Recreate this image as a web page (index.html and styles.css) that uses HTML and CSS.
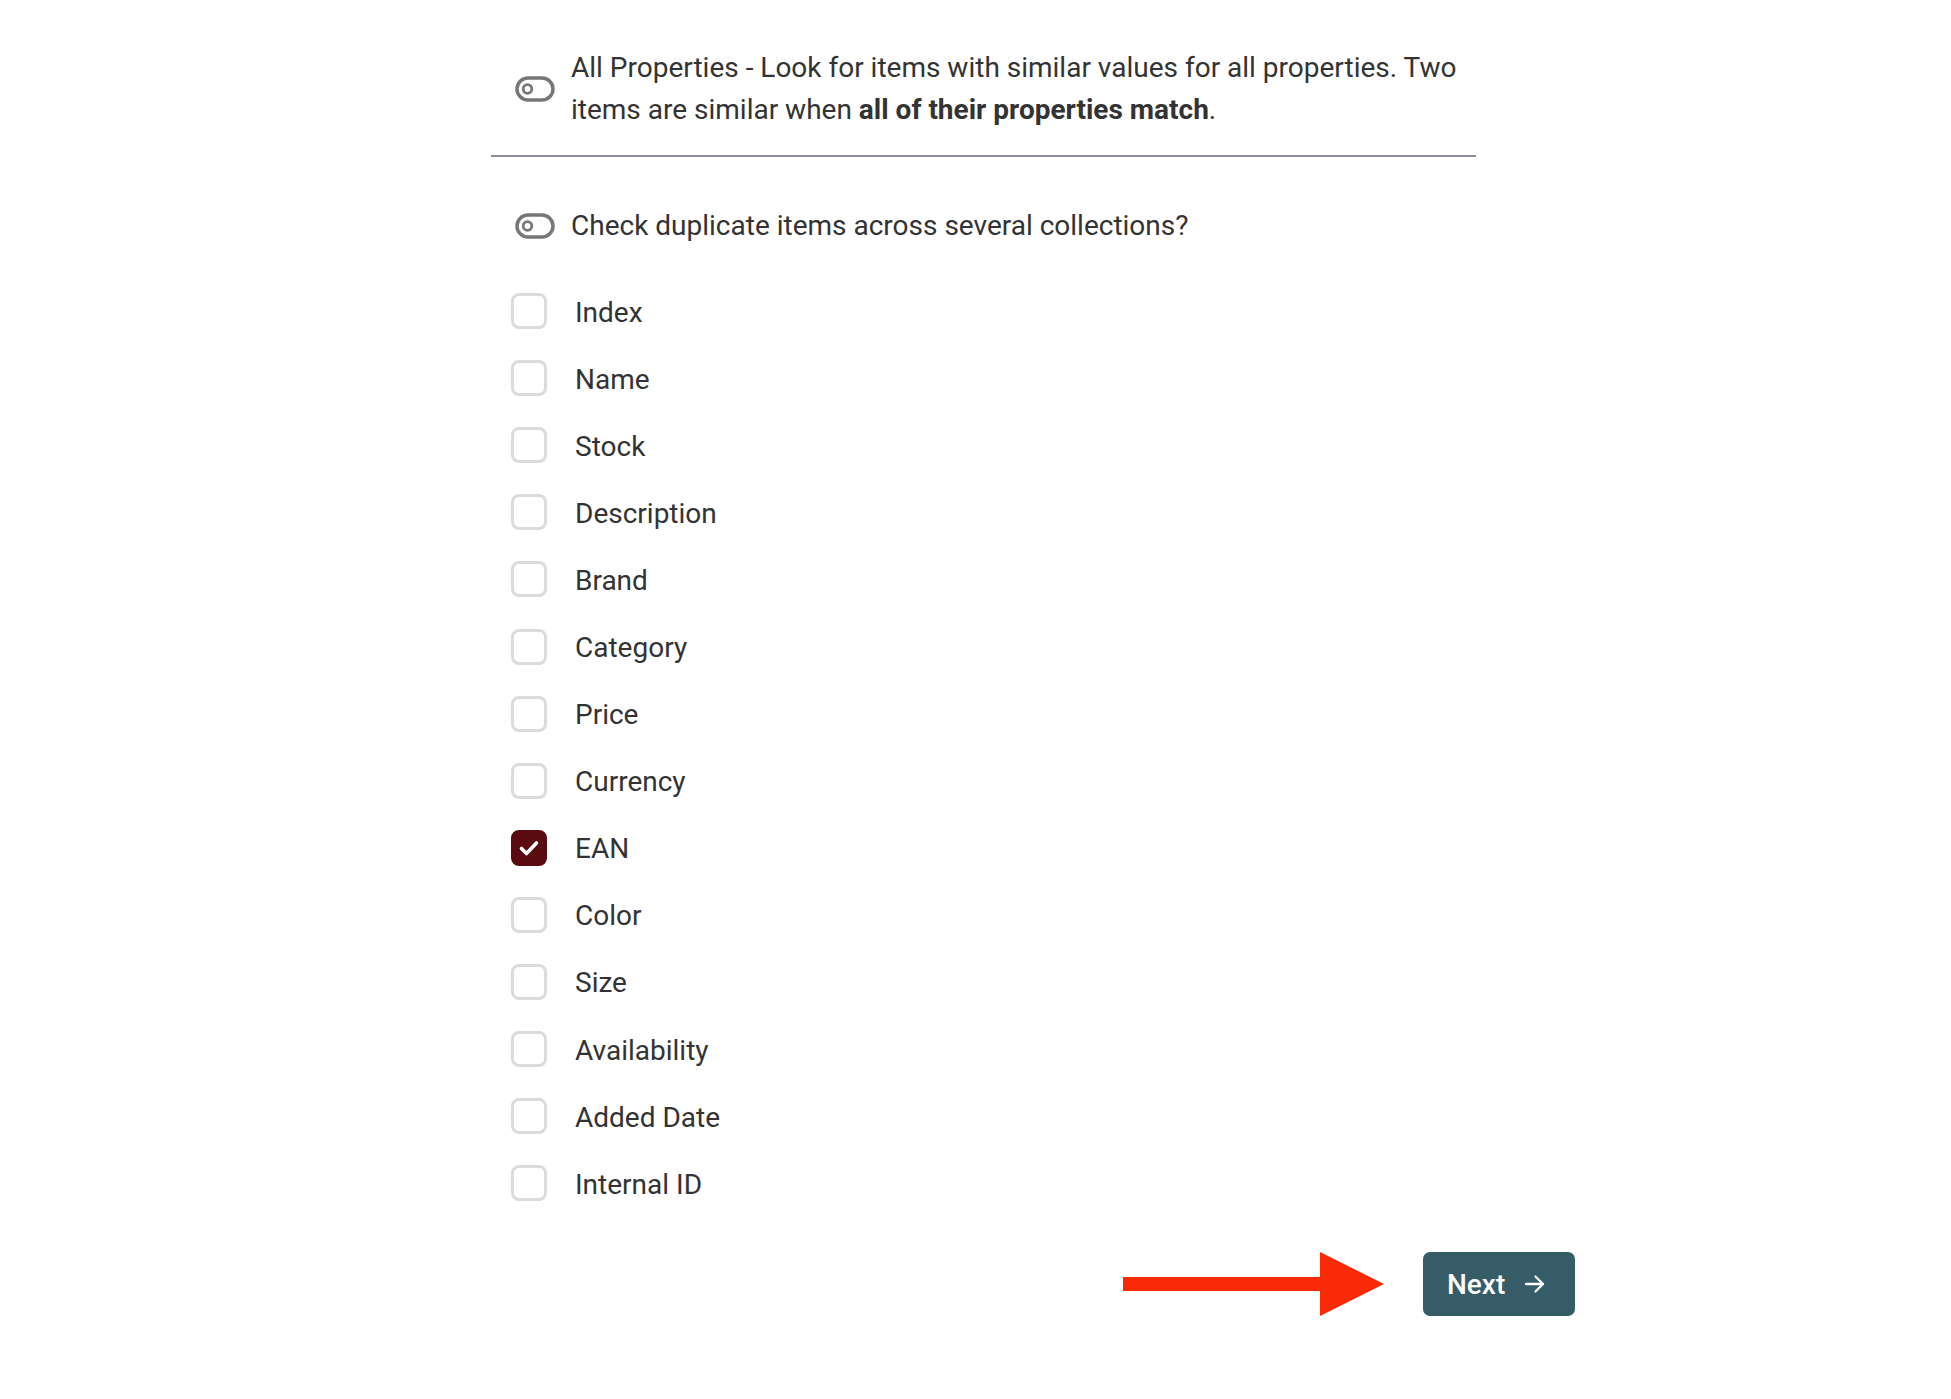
FILE: index.html
```html
<!DOCTYPE html>
<html lang="en">
<head>
<meta charset="utf-8">
<title>Duplicate check</title>
<link rel="stylesheet" href="styles.css">
</head>
<body>
<main class="wrap">
  <section class="option option-top">
    <svg class="toggle" viewBox="0 0 40 26" aria-hidden="true"><rect x="2" y="2" width="36" height="22" rx="11"/><circle cx="12.5" cy="13" r="4.3"/></svg>
    <p class="option-text">All Properties - Look for items with similar values for all properties. Two items are similar when <strong>all of their properties match</strong>.</p>
  </section>
  <section class="option option-second">
    <svg class="toggle" viewBox="0 0 40 26" aria-hidden="true"><rect x="2" y="2" width="36" height="22" rx="11"/><circle cx="12.5" cy="13" r="4.3"/></svg>
    <p class="option-text">Check duplicate items across several collections?</p>
  </section>
  <ul class="props">
    <li class="prop"><span class="box"></span><span class="label">Index</span></li>
    <li class="prop"><span class="box"></span><span class="label">Name</span></li>
    <li class="prop"><span class="box"></span><span class="label">Stock</span></li>
    <li class="prop"><span class="box"></span><span class="label">Description</span></li>
    <li class="prop"><span class="box"></span><span class="label">Brand</span></li>
    <li class="prop"><span class="box"></span><span class="label">Category</span></li>
    <li class="prop"><span class="box"></span><span class="label">Price</span></li>
    <li class="prop"><span class="box"></span><span class="label">Currency</span></li>
    <li class="prop"><span class="box checked"><svg viewBox="0 0 36 36" aria-hidden="true"><path d="M10.5 18.5l5 5 10-10.5"/></svg></span><span class="label">EAN</span></li>
    <li class="prop"><span class="box"></span><span class="label">Color</span></li>
    <li class="prop"><span class="box"></span><span class="label">Size</span></li>
    <li class="prop"><span class="box"></span><span class="label">Availability</span></li>
    <li class="prop"><span class="box"></span><span class="label">Added Date</span></li>
    <li class="prop"><span class="box"></span><span class="label">Internal ID</span></li>
  </ul>
  <div class="footer">
    <svg class="pointer" viewBox="0 0 261 64" aria-hidden="true"><rect x="0" y="25" width="199" height="14"/><polygon points="197,0 261,32 197,64"/></svg>
    <button class="next" type="button">Next<svg viewBox="0 0 24 24" aria-hidden="true"><path d="M3 12h17M12.5 4.5l7.5 7.5-7.5 7.5"/></svg></button>
  </div>
</main>
</body>
</html>
```
FILE: styles.css
```css
html, body {
  margin: 0;
  padding: 0;
  background: #ffffff;
}
body {
  font-family: Roboto, "Liberation Sans", Arial, sans-serif;
  color: #333333;
  font-size: 28px;
  line-height: 42px;
}
.wrap {
  width: 1084px;
  margin-left: 491px;
  padding-top: 47px;
  padding-bottom: 60px;
}
.option {
  display: flex;
  align-items: center;
  gap: 16px;
  width: 985px;
  box-sizing: border-box;
  padding-left: 24px;
}
.option-top {
  padding-bottom: 24px;
  border-bottom: 2px solid #898e97;
}
.option-second {
  margin-top: 48px;
}
.option-text {
  margin: 0;
  flex: 1;
}
.option-text strong {
  font-weight: 700;
}
.toggle {
  width: 40px;
  height: 26px;
  flex: none;
  fill: none;
  stroke: #777777;
}
.toggle rect {
  stroke-width: 3.5;
}
.toggle circle {
  stroke-width: 2.8;
}
.props {
  list-style: none;
  margin: 32px 0 0;
  padding: 0;
}
.prop {
  display: flex;
  align-items: center;
  height: 67.1px;
  padding-left: 20px;
}
.box {
  width: 36px;
  height: 36px;
  box-sizing: border-box;
  border: 3px solid #dadbde;
  border-radius: 8px;
  flex: none;
  display: flex;
  align-items: center;
  justify-content: center;
  margin-top: -3px;
}
.box.checked {
  background: #5a0b11;
  border-color: #5a0b11;
}
.box.checked svg {
  width: 36px;
  height: 36px;
  flex: none;
  fill: none;
  stroke: #ffffff;
  stroke-width: 3.6;
  stroke-linecap: round;
  stroke-linejoin: round;
}
.label {
  margin-left: 28px;
}
.footer {
  display: flex;
  justify-content: flex-end;
  align-items: center;
  gap: 39px;
  margin-top: 34px;
}
.pointer {
  width: 261px;
  height: 64px;
  fill: #fb2a06;
}
.next {
  display: flex;
  align-items: center;
  gap: 18px;
  height: 64px;
  width: 152px;
  box-sizing: border-box;
  padding: 0 27px 0 24px;
  border: none;
  border-radius: 7px;
  background: #355c67;
  color: #ffffff;
  font-family: Roboto, "Liberation Sans", Arial, sans-serif;
  font-size: 28px;
  font-weight: 500;
}
.next svg {
  width: 24px;
  height: 24px;
  fill: none;
  stroke: #ffffff;
  stroke-width: 2.3;
  stroke-linecap: round;
  stroke-linejoin: round;
}
```
